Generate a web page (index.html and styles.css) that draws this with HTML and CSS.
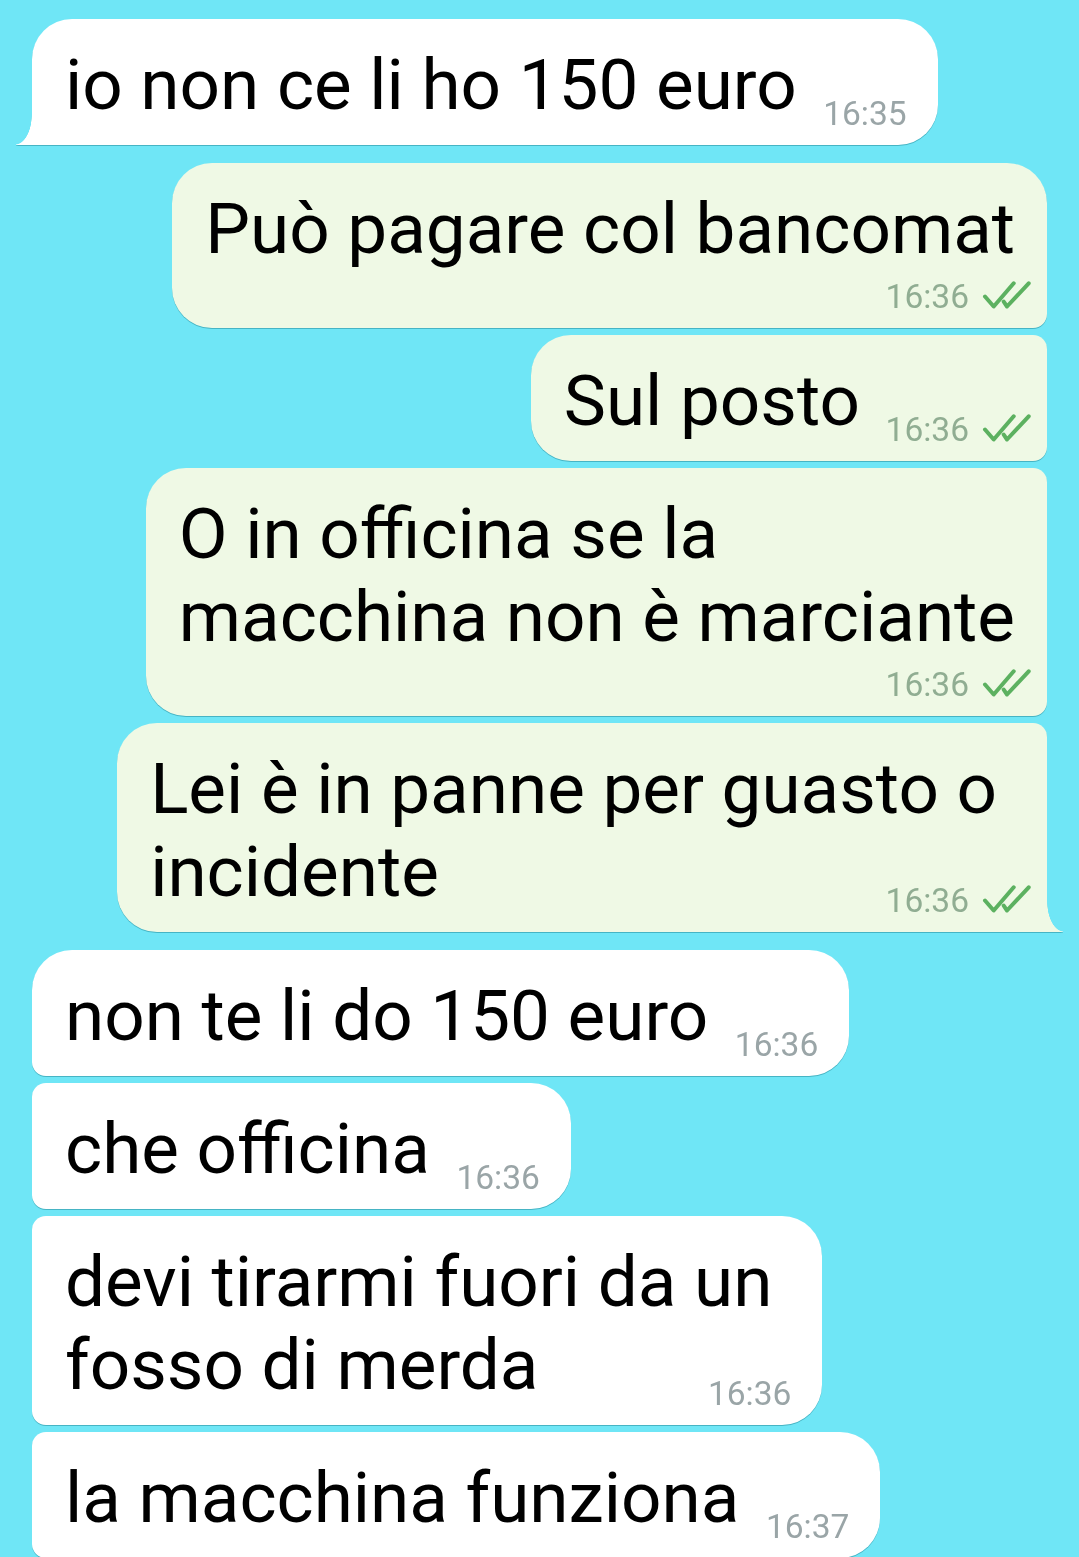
FILE: index.html
```html
<!DOCTYPE html>
<html lang="it">

<head>
    <meta charset="UTF-8"/>
    <meta name="viewport" content="width=device-width, initial-scale=1.0"/>
    <title>Chat</title>
    <link rel="stylesheet" href="styles.css">
</head>

<body>
<div class="chat">
    <!-- lui -->
    <div class="group in">
        <div class="bubble inline tail">
            io non ce li ho 150 euro
            <span class="meta"><span class="time">16:35</span></span>
        </div>
    </div>

    <!-- io -->
    <div class="group out">
        <div class="bubble stacked">
            Può pagare col bancomat
            <span class="meta"><span class="time">16:36</span><svg class="ticks" viewBox="0 0 50 28"><path d="M3 15.5 L11.7 25.5 L31.7 2.3 M21.7 20.7 L25 25.5 L46.7 2.3"/></svg></span>
        </div>
        <div class="bubble inline">
            Sul posto
            <span class="meta"><span class="time">16:36</span><svg class="ticks" viewBox="0 0 50 28"><path d="M3 15.5 L11.7 25.5 L31.7 2.3 M21.7 20.7 L25 25.5 L46.7 2.3"/></svg></span>
        </div>
        <div class="bubble stacked">
            O in officina se la<br>macchina non è marciante
            <span class="meta"><span class="time">16:36</span><svg class="ticks" viewBox="0 0 50 28"><path d="M3 15.5 L11.7 25.5 L31.7 2.3 M21.7 20.7 L25 25.5 L46.7 2.3"/></svg></span>
        </div>
        <div class="bubble multi tail">
            Lei è in panne per guasto o<br>incidente
            <span class="meta"><span class="time">16:36</span><svg class="ticks" viewBox="0 0 50 28"><path d="M3 15.5 L11.7 25.5 L31.7 2.3 M21.7 20.7 L25 25.5 L46.7 2.3"/></svg></span>
        </div>
    </div>

    <!-- lui -->
    <div class="group in">
        <div class="bubble inline">
            non te li do 150 euro
            <span class="meta"><span class="time">16:36</span></span>
        </div>
        <div class="bubble inline">
            che officina
            <span class="meta"><span class="time">16:36</span></span>
        </div>
        <div class="bubble multi">
            devi tirarmi fuori da un<br>fosso di merda
            <span class="meta"><span class="time">16:36</span></span>
        </div>
        <div class="bubble inline">
            la macchina funziona
            <span class="meta"><span class="time">16:37</span></span>
        </div>
    </div>
</div>
</body>
</html>
```

FILE: styles.css
```css
* {
    box-sizing: border-box;
}

body {
    margin: 0;
    background: #6fe6f6;
    font-family: Roboto, "Noto Sans", sans-serif;
    overflow: hidden;
}

.chat {
    display: flex;
    flex-direction: column;
    gap: 18px;
    padding: 19px 32px 0 32px;
}

.group {
    display: flex;
    flex-direction: column;
    gap: 7px;
}

.group.in {
    align-items: flex-start;
}

.group.out {
    align-items: flex-end;
}

.bubble {
    position: relative;
    width: fit-content;
    padding: 24px 32px 19px 33px;
    font-size: 71px;
    line-height: 83px;
    color: #000;
    background: #fff;
    border-radius: 40px;
    filter: drop-shadow(0 1.5px 0.5px rgba(20, 120, 135, 0.45));
}

.group.out .bubble {
    background: #eff9e5;
}

/* angoli dentro il gruppo */
.group.in .bubble {
    border-radius: 14px 40px 40px 14px;
}

.group.in .bubble:first-child {
    border-top-left-radius: 40px;
}

.group.out .bubble {
    border-radius: 40px 14px 14px 40px;
}

.group.out .bubble:first-child {
    border-top-right-radius: 40px;
}

.bubble.inline {
    padding-right: 141px;
}

.group.out .bubble.inline {
    padding-right: 187px;
}

.bubble.stacked {
    padding-bottom: 58px;
}

.bubble.multi {
    padding-right: 50px;
}

/* codina */
.group.in .bubble.tail {
    border-bottom-left-radius: 0;
}

.group.out .bubble.tail {
    border-bottom-right-radius: 0;
}

.bubble.tail::before {
    content: "";
    position: absolute;
    bottom: 0;
    width: 18px;
    height: 30px;
}

.group.in .bubble.tail::before {
    left: -16px;
    background: radial-gradient(ellipse 17px 30px at -1px 0, transparent 97%, #fff 100%);
}

.group.out .bubble.tail::before {
    right: -16px;
    background: radial-gradient(ellipse 17px 30px at 19px 0, transparent 97%, #eff9e5 100%);
}

.meta {
    position: absolute;
    right: 31px;
    bottom: 14px;
    display: flex;
    align-items: flex-end;
    gap: 13px;
    font-size: 33.5px;
    line-height: 34px;
    color: #9aa5a7;
}

.group.out .meta {
    right: 20px;
    color: #90ad92;
}

.ticks {
    width: 50px;
    height: 28px;
    margin-bottom: 5px;
    margin-right: -5px;
}

.ticks path {
    fill: none;
    stroke: #5cb160;
    stroke-width: 4;
    stroke-linecap: round;
    stroke-linejoin: round;
}
```
